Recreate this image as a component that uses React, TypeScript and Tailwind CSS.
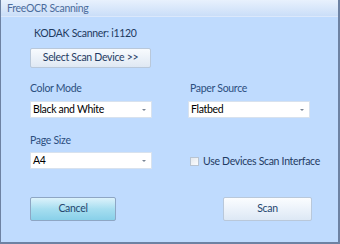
import React from 'react'

const font = { fontFamily: 'Lato, "DejaVu Sans", sans-serif' }

function Combo({ value, w }: { value: string; w: string }) {
  return (
    <div className={`${w} h-[17px] bg-white border border-[#d8e2ee] flex items-center justify-between pl-[2px] pr-[5px]`}>
      <span className="text-[10.5px] text-black leading-none whitespace-nowrap">{value}</span>
      <span className="w-0 h-0 border-l-[2px] border-r-[2px] border-t-[2px] border-l-transparent border-r-transparent border-t-[#7a8595]" />
    </div>
  )
}

export default function App() {
  return (
    <div className="w-[340px] h-[244px] bg-[#bfdbfe] border-l border-r-2 border-b-2 border-[#6d82a3] flex flex-col whitespace-nowrap tracking-[-0.3px]" style={font}>
      {/* Title bar */}
      <div className="h-[17px] pl-[6px] flex items-center bg-gradient-to-b from-[#e8f1fd] to-[#cadef8] border-b border-[#dbe8fb]">
        <span className="text-[10.5px] text-[#4b6c9c] leading-none">FreeOCR Scanning</span>
      </div>

      <div className="pl-[29px] flex flex-col">
        <div className="mt-[10px] pl-[4px] h-[14px] flex items-center text-[10.5px] text-[#1e3a5f]">KODAK Scanner: i1120</div>
        <button className="mt-[7px] w-[121px] h-[20px] rounded-[2px] border border-[#b9c8da] bg-gradient-to-b from-[#f8fbfe] to-[#dfe8f3] text-[10.5px] text-[#1f3b63] flex items-center justify-center">
          Select Scan Device &gt;&gt;
        </button>

        <div className="mt-[14px] flex">
          <div className="w-[158px] flex flex-col">
            <div className="h-[14px] flex items-center text-[10.5px] text-[#2c4f7f]">Color Mode</div>
            <div className="mt-[5px]"><Combo value="Black and White" w="w-[122px]" /></div>
            <div className="mt-[16px] h-[14px] flex items-center text-[10.5px] text-[#2c4f7f]">Page Size</div>
            <div className="mt-[4px]"><Combo value="A4" w="w-[122px]" /></div>
          </div>
          <div className="flex flex-col">
            <div className="pl-[2px] h-[14px] flex items-center text-[10.5px] text-[#2c4f7f]">Paper Source</div>
            <div className="mt-[5px]"><Combo value="Flatbed" w="w-[122px]" /></div>
            <div className="mt-[38px] pl-[2px] flex items-center gap-[4px]">
              <span className="w-[9px] h-[9px] border border-[#b8c4d2] bg-gradient-to-br from-[#e4e9ef] to-[#fbfcfd]" />
              <span className="text-[10.5px] text-[#1f3b63] leading-none">Use Devices Scan Interface</span>
            </div>
          </div>
        </div>

        <div className="mt-[28px] flex">
          <button className="w-[86px] h-[24px] rounded-[2px] border border-[#8ea6c4] bg-gradient-to-b from-[#dcf2fb] via-[#a6def0] to-[#88d0e9] text-[10.5px] text-[#25466f] flex items-center justify-center">
            Cancel
          </button>
          <button className="ml-[107px] w-[89px] h-[24px] rounded-[2px] border border-[#b9c8da] bg-gradient-to-b from-[#fbfdff] to-[#dde8f5] text-[10.5px] text-[#25466f] flex items-center justify-center">
            Scan
          </button>
        </div>
      </div>
    </div>
  )
}
